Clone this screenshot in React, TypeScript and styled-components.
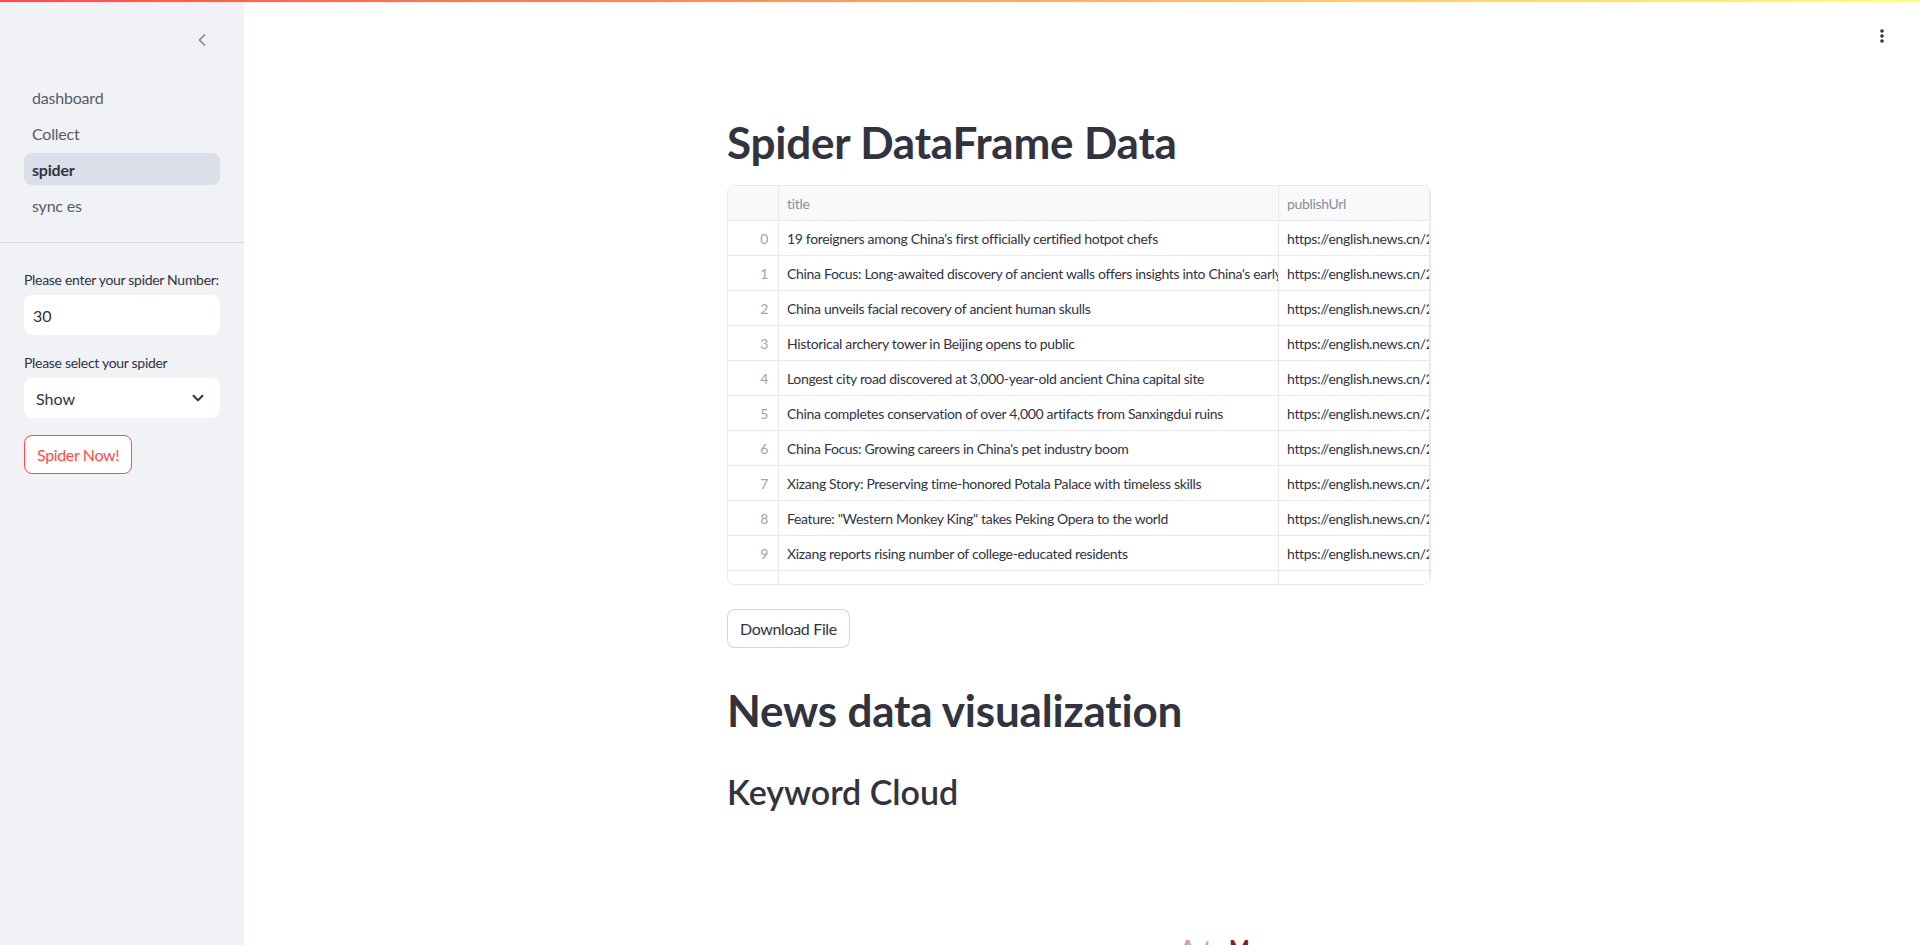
import { createGlobalStyle, styled } from 'styled-components'
import { ChevronLeft, ChevronDown } from 'lucide-react'

const TEXT = '#31333f'
const FONT = `Lato, 'Noto Sans', sans-serif`
const GRID_LINE = '#e9eaed'

const GlobalStyle = createGlobalStyle`
  html, body { margin: 0; padding: 0; height: 100%; }
  body { font-family: ${FONT}; color: ${TEXT}; background: #fff; }
  * { box-sizing: border-box; }
`

const Decoration = styled.div`
  position: fixed;
  top: 0;
  left: 0;
  right: 0;
  height: 2px;
  background: linear-gradient(90deg, #ff4b4b, #fffd80);
  z-index: 10;
`

const AppShell = styled.div`
  display: flex;
  height: 100vh;
  overflow: hidden;
`

const Sidebar = styled.aside`
  width: 244px;
  flex-shrink: 0;
  background: #f0f2f6;
  display: flex;
  flex-direction: column;
`

const SidebarHeader = styled.div`
  height: 81px;
  display: flex;
  justify-content: flex-end;
  align-items: flex-start;
  padding: 30px 32px 0 0;
  color: #808495;
`

const NavList = styled.nav`
  display: flex;
  flex-direction: column;
  gap: 4px;
  padding: 0 24px 21px;
  border-bottom: 1px solid #d6d8de;
`

const NavItem = styled.div<{ $active?: boolean }>`
  height: 32px;
  padding: 0 8px;
  display: flex;
  align-items: center;
  border-radius: 8px;
  font-size: 16px;
  letter-spacing: -0.2px;
  color: ${(p) => (p.$active ? TEXT : '#585b67')};
  font-weight: ${(p) => (p.$active ? 700 : 400)};
  background: ${(p) => (p.$active ? 'rgba(151, 166, 195, 0.25)' : 'transparent')};
`

const SidebarForm = styled.div`
  display: flex;
  flex-direction: column;
  padding: 26px 24px;
`

const Field = styled.div`
  margin-bottom: 17px;
`

const Label = styled.div`
  font-size: 14px;
  line-height: 21px;
  letter-spacing: -0.3px;
  white-space: nowrap;
  margin-bottom: 5px;
`

const TextInput = styled.input`
  display: block;
  width: 100%;
  height: 40px;
  border: none;
  outline: none;
  border-radius: 8px;
  background: #fff;
  padding: 0 9px;
  font-family: ${FONT};
  font-size: 16px;
  color: ${TEXT};
`

const SelectBox = styled.div`
  height: 40px;
  border-radius: 8px;
  background: #fff;
  padding: 0 13px 0 12px;
  display: flex;
  align-items: center;
  justify-content: space-between;
  font-size: 16px;
`

const Button = styled.button<{ $primary?: boolean }>`
  height: 39px;
  width: fit-content;
  padding: 0 12px;
  border-radius: 8px;
  border: 1px solid ${(p) => (p.$primary ? '#ff4b4b' : 'rgba(49, 51, 63, 0.2)')};
  color: ${(p) => (p.$primary ? '#ff4b4b' : TEXT)};
  background: #fff;
  font-family: ${FONT};
  font-size: 16px;
  letter-spacing: -0.35px;
  cursor: pointer;
`

const Main = styled.main`
  flex: 1;
  position: relative;
  overflow: hidden;
  padding-right: 6px;
`

const MenuButton = styled.div`
  position: absolute;
  top: 26px;
  right: 30px;
  width: 16px;
  height: 22px;
  display: flex;
  align-items: center;
  justify-content: center;
  color: ${TEXT};
`

const Content = styled.div`
  width: 704px;
  margin: 0 auto;
  padding-top: 116px;
`

const Title = styled.h1<{ $gap?: number }>`
  font-size: 44px;
  font-weight: 700;
  line-height: 52.8px;
  letter-spacing: -0.2px;
  margin: ${(p) => p.$gap ?? 0}px 0 16px;
`

const SubTitle = styled.h2`
  font-size: 34px;
  font-weight: 600;
  line-height: 43.2px;
  margin: 33px 0 0;
`

const DataFrame = styled.div`
  height: 400px;
  border: 1px solid ${GRID_LINE};
  border-radius: 8px;
  overflow: hidden;
  margin-bottom: 24px;
`

const Row = styled.div<{ $header?: boolean }>`
  display: grid;
  grid-template-columns: 51px 500px 1fr;
  height: 35px;
  border-bottom: 1px solid ${GRID_LINE};
  background: ${(p) => (p.$header ? '#f8f9fb' : '#fff')};
  color: ${(p) => (p.$header ? '#8c8e96' : TEXT)};
`

const Cell = styled.div<{ $index?: boolean }>`
  display: flex;
  align-items: center;
  justify-content: ${(p) => (p.$index ? 'flex-end' : 'flex-start')};
  padding: ${(p) => (p.$index ? '2px 10px 0 0' : '2px 8px 0')};
  border-right: 1px solid ${GRID_LINE};
  white-space: nowrap;
  overflow: hidden;
  font-size: 14px;
  letter-spacing: -0.33px;
  color: ${(p) => (p.$index ? '#a0a3ad' : 'inherit')};
`

const CloudCanvas = styled.div`
  position: relative;
  height: 400px;
  margin-top: 16px;
`

const CloudWord = styled.span<{ $color: string; $size: number }>`
  position: absolute;
  font-family: ${FONT};
  font-weight: 700;
  line-height: 1;
  color: ${(p) => p.$color};
  font-size: ${(p) => p.$size}px;
`

const rows = [
  "19 foreigners among China's first officially certified hotpot chefs",
  "China Focus: Long-awaited discovery of ancient walls offers insights into China's early civilization",
  'China unveils facial recovery of ancient human skulls',
  'Historical archery tower in Beijing opens to public',
  'Longest city road discovered at 3,000-year-old ancient China capital site',
  'China completes conservation of over 4,000 artifacts from Sanxingdui ruins',
  "China Focus: Growing careers in China's pet industry boom",
  'Xizang Story: Preserving time-honored Potala Palace with timeless skills',
  'Feature: "Western Monkey King" takes Peking Opera to the world',
  'Xizang reports rising number of college-educated residents',
]

const navItems = ['dashboard', 'Collect', 'spider', 'sync es']

export default function App() {
  return (
    <>
      <GlobalStyle />
      <Decoration />
      <AppShell>
        <Sidebar>
          <SidebarHeader>
            <ChevronLeft size={20} strokeWidth={2} />
          </SidebarHeader>
          <NavList>
            {navItems.map((n) => (
              <NavItem key={n} $active={n === 'spider'}>
                {n}
              </NavItem>
            ))}
          </NavList>
          <SidebarForm>
            <Field>
              <Label>Please enter your spider Number:</Label>
              <TextInput defaultValue="30" />
            </Field>
            <Field>
              <Label>Please select your spider</Label>
              <SelectBox>
                <span>Show</span>
                <ChevronDown size={18} strokeWidth={2.5} />
              </SelectBox>
            </Field>
            <Button $primary>Spider Now!</Button>
          </SidebarForm>
        </Sidebar>
        <Main>
          <MenuButton>
            <svg width="4" height="16" viewBox="0 0 4 16" fill="currentColor">
              <circle cx="2" cy="2" r="1.8" />
              <circle cx="2" cy="7" r="1.8" />
              <circle cx="2" cy="12" r="1.8" />
            </svg>
          </MenuButton>
          <Content>
            <Title>Spider DataFrame Data</Title>
            <DataFrame>
              <Row $header>
                <Cell $index />
                <Cell>title</Cell>
                <Cell>publishUrl</Cell>
              </Row>
              {rows.map((t, i) => (
                <Row key={i}>
                  <Cell $index>{i}</Cell>
                  <Cell>{t}</Cell>
                  <Cell>https://english.news.cn/20241015/</Cell>
                </Row>
              ))}
              <Row>
                <Cell $index />
                <Cell />
                <Cell />
              </Row>
            </DataFrame>
            <Button>Download File</Button>
            <Title $gap={36}>News data visualization</Title>
            <SubTitle>Keyword Cloud</SubTitle>
            <CloudCanvas>
              <CloudWord $color="#d3a195" $size={22} style={{ left: 453, top: 109 }}>
                Art
              </CloudWord>
              <CloudWord $color="#8b1d1d" $size={22} style={{ left: 502, top: 109 }}>
                Museum
              </CloudWord>
            </CloudCanvas>
          </Content>
        </Main>
      </AppShell>
    </>
  )
}
